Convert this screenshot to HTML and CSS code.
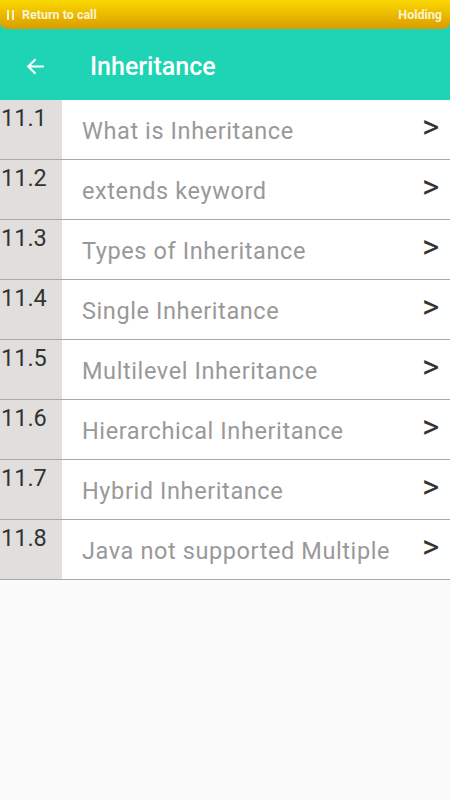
FILE: index.html
```html
<!DOCTYPE html>
<html>
<head>
<meta charset="utf-8">
<link rel="stylesheet" href="styles.css">
</head>
<body>
<div class="top">
  <div class="callbar">
    <div class="call-left">
      <span class="pause"><i></i><i></i></span>
      <span>Return to call</span>
    </div>
    <span>Holding</span>
  </div>
  <div class="appbar">
    <svg class="back" width="24" height="24" viewBox="0 0 24 24"><path d="M20 12H5M12 5l-7 7 7 7" fill="none" stroke="#fff" stroke-width="2"/></svg>
    <span class="title">Inheritance</span>
  </div>
</div>
<ul class="list">
  <li class="row"><span class="num">11.1</span><span class="label">What is Inheritance</span><span class="chev">&gt;</span></li>
  <li class="row"><span class="num">11.2</span><span class="label">extends keyword</span><span class="chev">&gt;</span></li>
  <li class="row"><span class="num">11.3</span><span class="label">Types of Inheritance</span><span class="chev">&gt;</span></li>
  <li class="row"><span class="num">11.4</span><span class="label">Single Inheritance</span><span class="chev">&gt;</span></li>
  <li class="row"><span class="num">11.5</span><span class="label">Multilevel Inheritance</span><span class="chev">&gt;</span></li>
  <li class="row"><span class="num">11.6</span><span class="label">Hierarchical Inheritance</span><span class="chev">&gt;</span></li>
  <li class="row"><span class="num">11.7</span><span class="label">Hybrid Inheritance</span><span class="chev">&gt;</span></li>
  <li class="row"><span class="num">11.8</span><span class="label">Java not supported Multiple</span><span class="chev">&gt;</span></li>
</ul>
</body>
</html>
```
FILE: styles.css
```css
html, body {
  margin: 0;
  padding: 0;
  background: #fafafa;
  font-family: Roboto, "Liberation Sans", sans-serif;
  width: 450px;
  height: 800px;
  overflow: hidden;
}
.top {
  background: #1ed4b4;
}
.callbar {
  height: 29px;
  box-sizing: border-box;
  background: linear-gradient(#fbd800, #d99c00);
  border-radius: 0 0 7px 7px;
  display: flex;
  align-items: center;
  justify-content: space-between;
  padding: 0 8px 0 7px;
  color: #fbf3d0;
  font-weight: bold;
  font-size: 12.5px;
}
.call-left {
  display: flex;
  align-items: center;
  gap: 8px;
}
.pause {
  display: flex;
  gap: 3px;
  height: 10px;
}
.pause i {
  width: 2px;
  height: 10px;
  background: #fbf3d0;
}
.appbar {
  height: 71px;
  display: flex;
  align-items: center;
  padding-left: 23px;
  box-sizing: border-box;
  padding-top: 3px;
}
.back {
  width: 25px;
  height: 25px;
}
.title {
  margin-left: 42px;
  color: #fff;
  font-size: 25px;
  font-weight: 500;
}
.list {
  list-style: none;
  margin: 0;
  padding: 0;
}
.row {
  height: 60px;
  display: flex;
  background: #fff;
  border-bottom: 1px solid #a9a9a9;
  box-sizing: border-box;
}
.num {
  width: 62px;
  flex: none;
  background: #e0dfdd;
  color: #333;
  font-size: 23.5px;
  line-height: 37px;
  padding-left: 1px;
  box-sizing: border-box;
}
.label {
  flex: 1;
  color: #999;
  font-size: 23.5px;
  letter-spacing: 0.6px;
  padding-left: 20px;
  line-height: 62px;
  white-space: nowrap;
}
.chev {
  width: 28px;
  flex: none;
  color: #333;
  font-size: 33px;
  line-height: 54px;
}
```
